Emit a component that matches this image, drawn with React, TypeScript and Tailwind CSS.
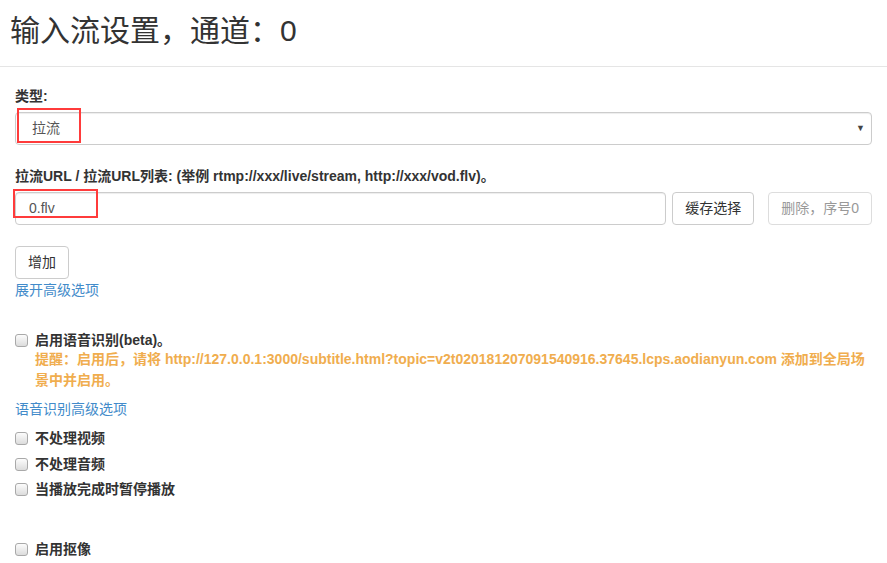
import React from "react";

const font = { fontFamily: '"Liberation Sans", "Noto Sans CJK SC", sans-serif' };

function Box() {
  return (
    <span className="inline-block w-[13px] h-[13px] shrink-0 rounded-[3px] border border-[#a9a9a9] bg-gradient-to-b from-[#fcfcfc] to-[#dcdcdc]" />
  );
}

function Check({ label }: { label: string }) {
  return (
    <div className="flex items-center h-[25.5px]">
      <Box />
      <span className="ml-[7px] text-[14px] font-bold text-[#333]">{label}</span>
    </div>
  );
}

export default function App() {
  return (
    <div className="w-[887px] h-[563px] bg-white overflow-hidden text-[#333]" style={font}>
      <div className="h-[67px] border-b border-[#e5e5e5] px-[10px] flex items-center">
        <h1 className="text-[30px] leading-none font-normal text-[#333] -mt-[4px]">输入流设置，通道：0</h1>
      </div>
      <div className="px-[15px] pt-[20px]">
        <div className="text-[14px] font-bold leading-[18px]">类型:</div>
        <div className="relative mt-[7px]">
          <div className="h-[33px] border border-[#ccc] rounded-[4px] flex items-center justify-between pl-[16px] pr-[6px] shadow-[inset_0_1px_1px_rgba(0,0,0,0.075)]">
            <span className="text-[14px] text-[#555]">拉流</span>
            <span className="text-[9px] text-[#444]">▼</span>
          </div>
          <div className="absolute left-[2px] top-[-4px] w-[64px] h-[35px] border-[2px] border-[#ff3b3b]" />
        </div>
        <div className="text-[14px] font-bold leading-[18px] mt-[22px]">
          拉流URL / 拉流URL列表: (举例 rtmp://xxx/live/stream, http://xxx/vod.flv)。
        </div>
        <div className="flex mt-[7px] relative">
          <div className="w-[652px] h-[33px] border border-[#ccc] rounded-[4px] flex items-center pl-[13px] shadow-[inset_0_1px_1px_rgba(0,0,0,0.075)]">
            <span className="text-[14px] text-[#555]">0.flv</span>
          </div>
          <button className="ml-[6px] w-[82px] h-[33px] border border-[#ccc] rounded-[4px] text-[14px] text-[#333] bg-white">缓存选择</button>
          <button className="ml-[14px] w-[104px] h-[33px] border border-[#ddd] rounded-[4px] text-[14px] text-[#999] bg-white">删除，序号0</button>
          <div className="absolute left-[-2px] top-[-3px] w-[85px] h-[29px] border-[2px] border-[#ff3b3b]" />
        </div>
        <button className="mt-[21px] w-[54px] h-[33px] border border-[#ccc] rounded-[4px] text-[14px] text-[#333] bg-white block">增加</button>
        <div className="text-[14px] text-[#428bca] leading-[20px] mt-[1px]">展开高级选项</div>
        <div className="mt-[30px] flex items-center h-[20px]">
          <Box />
          <span className="ml-[7px] text-[14px] font-bold">启用语音识别(beta)。</span>
        </div>
        <div className="pl-[20px] text-[14px] font-bold text-[#f0ad4e] leading-[21px] -mt-[1px]">
          提醒：启用后，请将 http://127.0.0.1:3000/subtitle.html?topic=v2t020181207091540916.37645.lcps.aodianyun.com 添加到全局场<br />景中并启用。
        </div>
        <div className="text-[14px] text-[#428bca] leading-[20px] mt-[8px]">语音识别高级选项</div>
        <div className="mt-[7px]">
          <Check label="不处理视频" />
          <Check label="不处理音频" />
          <Check label="当播放完成时暂停播放" />
        </div>
        <div className="mt-[34px]">
          <Check label="启用抠像" />
        </div>
      </div>
    </div>
  );
}
